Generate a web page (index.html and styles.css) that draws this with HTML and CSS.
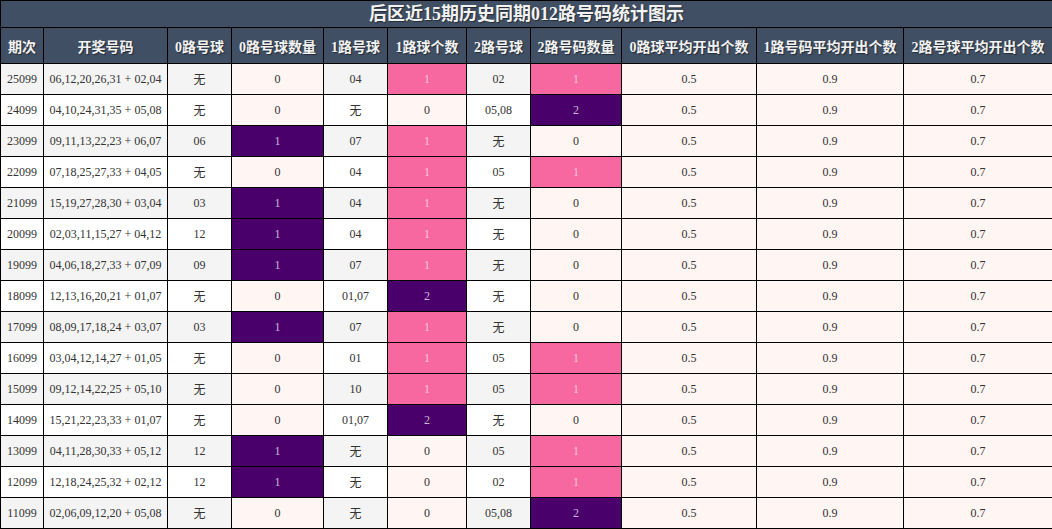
FILE: index.html
```html
<!DOCTYPE html>
<html lang="zh">
<head>
<meta charset="utf-8">
<title>后区近15期历史同期012路号码统计图示</title>
<link rel="stylesheet" href="styles.css">
</head>
<body>
<table class="stat">
  <colgroup>
    <col class="c-qi"><col class="c-kj"><col class="c-b"><col class="c-n"><col class="c-b"><col class="c-n2"><col class="c-b"><col class="c-n3"><col class="c-a1"><col class="c-a2"><col class="c-a3">
  </colgroup>
  <thead>
    <tr><th class="title" colspan="11">后区近15期历史同期012路号码统计图示</th></tr>
    <tr class="head">
      <th>期次</th><th>开奖号码</th><th>0路号球</th><th>0路号球数量</th><th>1路号球</th><th>1路球个数</th><th>2路号球</th><th>2路号码数量</th><th>0路球平均开出个数</th><th>1路号码平均开出个数</th><th>2路号球平均开出个数</th>
    </tr>
  </thead>
  <tbody>
    <tr class="odd"><td>25099</td><td>06,12,20,26,31 + 02,04</td><td>无</td><td class="cnt">0</td><td>04</td><td class="cnt pink">1</td><td>02</td><td class="cnt pink">1</td><td class="avg">0.5</td><td class="avg">0.9</td><td class="avg">0.7</td></tr>
    <tr><td>24099</td><td>04,10,24,31,35 + 05,08</td><td>无</td><td class="cnt">0</td><td>无</td><td class="cnt">0</td><td>05,08</td><td class="cnt purple">2</td><td class="avg">0.5</td><td class="avg">0.9</td><td class="avg">0.7</td></tr>
    <tr class="odd"><td>23099</td><td>09,11,13,22,23 + 06,07</td><td>06</td><td class="cnt purple">1</td><td>07</td><td class="cnt pink">1</td><td>无</td><td class="cnt">0</td><td class="avg">0.5</td><td class="avg">0.9</td><td class="avg">0.7</td></tr>
    <tr><td>22099</td><td>07,18,25,27,33 + 04,05</td><td>无</td><td class="cnt">0</td><td>04</td><td class="cnt pink">1</td><td>05</td><td class="cnt pink">1</td><td class="avg">0.5</td><td class="avg">0.9</td><td class="avg">0.7</td></tr>
    <tr class="odd"><td>21099</td><td>15,19,27,28,30 + 03,04</td><td>03</td><td class="cnt purple">1</td><td>04</td><td class="cnt pink">1</td><td>无</td><td class="cnt">0</td><td class="avg">0.5</td><td class="avg">0.9</td><td class="avg">0.7</td></tr>
    <tr><td>20099</td><td>02,03,11,15,27 + 04,12</td><td>12</td><td class="cnt purple">1</td><td>04</td><td class="cnt pink">1</td><td>无</td><td class="cnt">0</td><td class="avg">0.5</td><td class="avg">0.9</td><td class="avg">0.7</td></tr>
    <tr class="odd"><td>19099</td><td>04,06,18,27,33 + 07,09</td><td>09</td><td class="cnt purple">1</td><td>07</td><td class="cnt pink">1</td><td>无</td><td class="cnt">0</td><td class="avg">0.5</td><td class="avg">0.9</td><td class="avg">0.7</td></tr>
    <tr><td>18099</td><td>12,13,16,20,21 + 01,07</td><td>无</td><td class="cnt">0</td><td>01,07</td><td class="cnt purple">2</td><td>无</td><td class="cnt">0</td><td class="avg">0.5</td><td class="avg">0.9</td><td class="avg">0.7</td></tr>
    <tr class="odd"><td>17099</td><td>08,09,17,18,24 + 03,07</td><td>03</td><td class="cnt purple">1</td><td>07</td><td class="cnt pink">1</td><td>无</td><td class="cnt">0</td><td class="avg">0.5</td><td class="avg">0.9</td><td class="avg">0.7</td></tr>
    <tr><td>16099</td><td>03,04,12,14,27 + 01,05</td><td>无</td><td class="cnt">0</td><td>01</td><td class="cnt pink">1</td><td>05</td><td class="cnt pink">1</td><td class="avg">0.5</td><td class="avg">0.9</td><td class="avg">0.7</td></tr>
    <tr class="odd"><td>15099</td><td>09,12,14,22,25 + 05,10</td><td>无</td><td class="cnt">0</td><td>10</td><td class="cnt pink">1</td><td>05</td><td class="cnt pink">1</td><td class="avg">0.5</td><td class="avg">0.9</td><td class="avg">0.7</td></tr>
    <tr><td>14099</td><td>15,21,22,23,33 + 01,07</td><td>无</td><td class="cnt">0</td><td>01,07</td><td class="cnt purple">2</td><td>无</td><td class="cnt">0</td><td class="avg">0.5</td><td class="avg">0.9</td><td class="avg">0.7</td></tr>
    <tr class="odd"><td>13099</td><td>04,11,28,30,33 + 05,12</td><td>12</td><td class="cnt purple">1</td><td>无</td><td class="cnt">0</td><td>05</td><td class="cnt pink">1</td><td class="avg">0.5</td><td class="avg">0.9</td><td class="avg">0.7</td></tr>
    <tr><td>12099</td><td>12,18,24,25,32 + 02,12</td><td>12</td><td class="cnt purple">1</td><td>无</td><td class="cnt">0</td><td>02</td><td class="cnt pink">1</td><td class="avg">0.5</td><td class="avg">0.9</td><td class="avg">0.7</td></tr>
    <tr class="odd"><td>11099</td><td>02,06,09,12,20 + 05,08</td><td>无</td><td class="cnt">0</td><td>无</td><td class="cnt">0</td><td>05,08</td><td class="cnt purple">2</td><td class="avg">0.5</td><td class="avg">0.9</td><td class="avg">0.7</td></tr>
  </tbody>
</table>
</body>
</html>
```

FILE: styles.css
```css
html, body {
  margin: 0;
  padding: 0;
  background: #ffffff;
}

.stat {
  width: 1052px;
  table-layout: fixed;
  border-collapse: collapse;
  font-family: "Liberation Serif", "Noto Sans CJK SC", serif;
  color: #333333;
}

.c-qi { width: 43px; }
.c-kj { width: 124px; }
.c-b { width: 64px; }
.c-n { width: 92px; }
.c-n2 { width: 79px; }
.c-n3 { width: 91px; }
.c-a1 { width: 135px; }
.c-a2 { width: 147px; }
.c-a3 { width: 149px; }

.stat th,
.stat td {
  border: 1px solid #000000;
  padding: 0;
  text-align: center;
  white-space: nowrap;
  overflow: hidden;
}

.stat th {
  background: #404f63;
  color: #f2f2f2;
  text-shadow: 1px 1px 1px rgba(0, 0, 0, 0.45);
}

.stat th.title {
  height: 26px;
  font-size: 18px;
  font-weight: bold;
  line-height: 26px;
}

.head th {
  height: 35px;
  font-size: 14px;
  font-weight: bold;
}

.stat td {
  height: 30px;
  font-size: 12px;
  background: #ffffff;
}

.stat tr.odd td {
  background: #f4f4f4;
}

.stat td.cnt,
.stat tr.odd td.cnt,
.stat td.avg,
.stat tr.odd td.avg {
  background: #fff5f2;
}

.stat td.pink,
.stat tr.odd td.pink {
  background: #f768a1;
  color: #fcc5d6;
}

.stat td.purple,
.stat tr.odd td.purple {
  background: #49006a;
  color: #cdb6dd;
}
```
